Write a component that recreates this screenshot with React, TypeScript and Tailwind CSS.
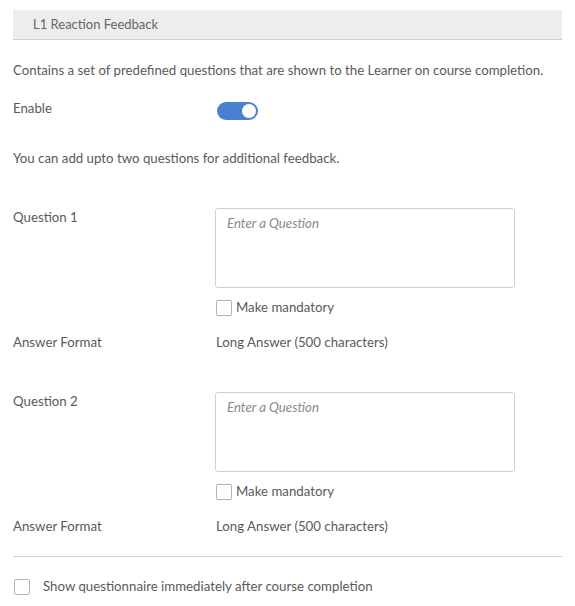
const textFont = { fontFamily: 'Lato, "Liberation Sans", sans-serif' };

function Checkbox() {
  return <span className="inline-block h-4 w-4 shrink-0 rounded-[2px] border border-[#b5b5b5] bg-white" />;
}

function QuestionBlock({ label }: { label: string }) {
  return (
    <>
      <div className="grid grid-cols-[202px_300px] items-start">
        <span className="-mt-[1px] leading-5">{label}</span>
        <div className="h-[80px] rounded-[3px] border border-[#cfcfcf] bg-white px-[11px] py-[4px] italic leading-5 text-[#8a8a8a]">
          Enter a Question
        </div>
      </div>
      <div className="mt-[10px] grid grid-cols-[202px_300px]">
        <span />
        <label className="flex h-5 items-center gap-1 pl-[1px]">
          <Checkbox />
          <span>Make mandatory</span>
        </label>
      </div>
      <div className="mt-[14px] grid grid-cols-[202px_300px] leading-5">
        <span>Answer Format</span>
        <span className="pl-[1px]">Long Answer (500 characters)</span>
      </div>
    </>
  );
}

export default function App() {
  return (
    <div className="min-h-[606px] bg-white px-[13px] pt-[10px] text-[13.25px] text-[#5a5a5a]" style={textFont}>
      <div className="flex h-[30px] items-center border-b border-[#cfcfcf] bg-[#ededed] pl-[20px] text-[13px] text-[#666]">
        L1 Reaction Feedback
      </div>

      <p className="mt-[20px] leading-5">
        Contains a set of predefined questions that are shown to the Learner on course completion.
      </p>

      <div className="mt-[18px] grid grid-cols-[204px_1fr] items-start leading-5">
        <span>Enable</span>
        <span className="mt-[4px] flex h-[18px] w-[41px] items-center justify-end rounded-full bg-[#4a80d2] pr-[1px]">
          <span className="h-4 w-4 rounded-full border border-[#4a80d2] bg-white" />
        </span>
      </div>

      <p className="mt-[28px] leading-5">You can add upto two questions for additional feedback.</p>

      <div className="mt-[40px]">
        <QuestionBlock label="Question 1" />
      </div>
      <div className="mt-[40px]">
        <QuestionBlock label="Question 2" />
      </div>

      <div className="mt-[20px] border-t border-[#cfcfcf]" />

      <label className="mt-[20px] flex h-5 items-center gap-[13px] pl-[1px]">
        <Checkbox />
        <span>Show questionnaire immediately after course completion</span>
      </label>
    </div>
  );
}
